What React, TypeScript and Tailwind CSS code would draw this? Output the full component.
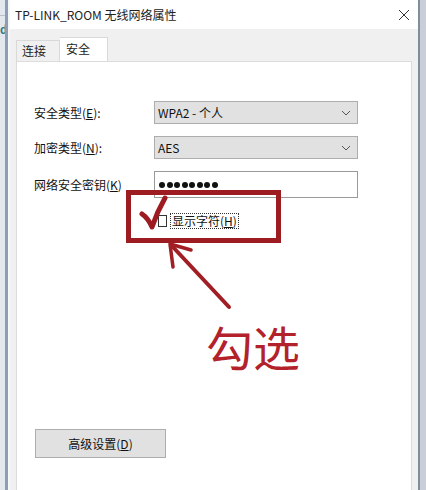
import React from "react";

const F = { fontFamily: '"Noto Sans CJK SC", "Noto Sans", sans-serif' };

function Chevron() {
  return (
    <svg width="10" height="6" viewBox="0 0 10 6" className="mr-[6px]">
      <path d="M1 1 L5 5 L9 1" fill="none" stroke="#555" strokeWidth="1" />
    </svg>
  );
}

function Row({ label, acc, children }: { label: string; acc: string; children: React.ReactNode }) {
  return (
    <div className="flex items-center">
      <div className="w-[120px] text-[12px] text-[#111]">
        {label}(<span className="underline">{acc}</span>){label.startsWith("网络") ? "" : ":"}
      </div>
      {children}
    </div>
  );
}

export default function App() {
  const dots = [0, 1, 2, 3, 4, 5, 6, 7];
  return (
    <div className="relative w-[426px] h-[490px] flex bg-[#c6ccd4] overflow-hidden" style={F}>
      {/* left background strip */}
      <div className="w-[5px] bg-[#e3e8ee] flex flex-col overflow-hidden">
        <div className="h-[16px] border-b border-[#b8c0ca]" />
        <div className="text-[11px] leading-none font-bold text-[#2f7a8a] mt-[8px]">d</div>
      </div>
      <div className="w-[3px] bg-[#8d9db6]" />
      {/* window */}
      <div className="w-[410px] flex flex-col bg-[#f0f0f0] border-l-[2px] border-[#f7f7fa]">
        <div className="h-[29px] bg-white flex items-center justify-between pl-[5px] pr-[8px]">
          <span className="text-[12px] text-[#222]">TP-LINK_ROOM 无线网络属性</span>
          <svg width="12" height="12" viewBox="0 0 12 12">
            <path d="M1 1 L11 11 M11 1 L1 11" stroke="#333" strokeWidth="1" />
          </svg>
        </div>
        <div className="h-[32px] flex items-end pl-[6px]">
          <div className="h-[21px] w-[44px] bg-[#f0f0f0] border border-b-0 border-[#d9d9d9] text-[12px] text-[#222] flex items-center pl-[5px]">
            连接
          </div>
          <div className="h-[24px] w-[48px] bg-white border border-b-0 border-l-0 border-[#d9d9d9] text-[12px] text-[#222] flex items-start pt-[2px] pl-[6px]">
            安全
          </div>
        </div>
        <div className="flex-1 mx-[6px] bg-white border border-b-0 border-[#dcdcdc] pl-[17px] pt-[39px] flex flex-col">
          <div className="flex flex-col gap-[12px]">
            <Row label="安全类型" acc="E">
              <div className="w-[204px] h-[23px] bg-[#e1e1e1] border border-[#adadad] flex items-center justify-between pl-[3px] text-[12px] text-[#111]">
                <span>WPA2 - 个人</span>
                <Chevron />
              </div>
            </Row>
            <Row label="加密类型" acc="N">
              <div className="w-[204px] h-[23px] bg-[#e1e1e1] border border-[#adadad] flex items-center justify-between pl-[3px] text-[12px] text-[#111]">
                <span>AES</span>
                <Chevron />
              </div>
            </Row>
            <Row label="网络安全密钥" acc="K">
              <div className="w-[204px] h-[27px] bg-white border border-[#9a9a9a] flex items-center pl-[4px] gap-[1.5px]">
                {dots.map((d) => (
                  <span key={d} className="w-[6px] h-[6px] rounded-full bg-[#111]" />
                ))}
              </div>
            </Row>
          </div>
          <div className="flex items-center mt-[15px] pl-[124px]">
            <div className="w-[9px] h-[12px] border border-[#333] bg-white" />
            <div className="ml-[3px] border border-dotted border-[#333] px-[1px] text-[12px] leading-[14px] text-[#111]">
              显示字符(<span className="underline">H</span>)
            </div>
          </div>
          <div className="mt-[200px] w-[131px] h-[29px] bg-[#e1e1e1] border border-[#adadad] flex items-center justify-center text-[12px] text-[#111] ml-[1px]">
            高级设置(<span className="underline">D</span>)
          </div>
        </div>
      </div>
      <div className="w-[2px] bg-[#7f8f98]" />
      <div className="flex-1 bg-[#c9ced8]" />

      {/* annotations */}
      <div className="absolute left-[126px] top-[190px] w-[155px] h-[53px] border-[5px] border-[#9c1c22]" />
      <svg className="absolute left-0 top-0" width="426" height="490" viewBox="0 0 426 490">
        <path d="M142 214 Q148 218 152 227 Q157 212 165 198" fill="none" stroke="#9c1c22" strokeWidth="5" strokeLinecap="round" strokeLinejoin="round" />
        <path d="M229 307 L172 246" stroke="#a01e24" strokeWidth="4" strokeLinecap="round" />
        <path d="M191 250 L170 244 L173 267" fill="none" stroke="#a01e24" strokeWidth="3.5" strokeLinecap="round" strokeLinejoin="round" />
      </svg>
      <div className="absolute left-[206px] top-[322px] text-[47px] leading-none text-[#b3212a]" style={F}>
        勾选
      </div>
    </div>
  );
}
